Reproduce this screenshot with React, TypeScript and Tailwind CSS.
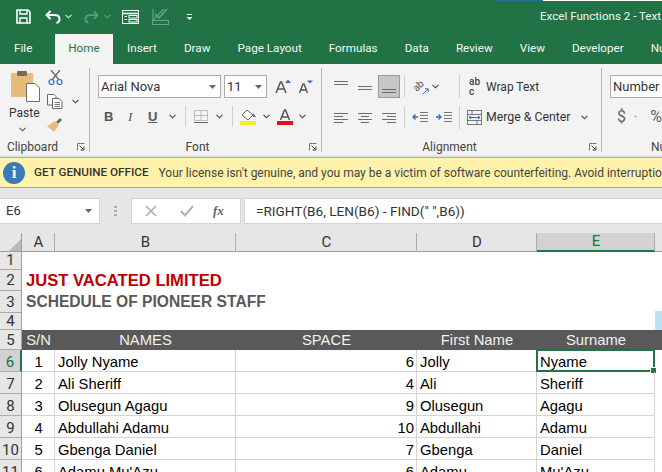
import React from "react";

const Chev = ({ c = "#444", className = "" }: { c?: string; className?: string }) => (
  <svg width="7" height="5" viewBox="0 0 7 5" className={className}>
    <path d="M0.5 0.8 L3.5 3.8 L6.5 0.8" fill="none" stroke={c} strokeWidth="1.1" />
  </svg>
);
const Tri = ({ className = "" }: { className?: string }) => (
  <svg width="7" height="4" viewBox="0 0 7 4" className={className}>
    <path d="M0 0 L7 0 L3.5 4 Z" fill="#666" />
  </svg>
);
const Launcher = ({ className = "" }: { className?: string }) => (
  <svg width="8" height="8" viewBox="0 0 8 8" className={className}>
    <path d="M0.5 7.5 V0.5 H7.5" fill="none" stroke="#777" />
    <path d="M2.5 2.5 L6.5 6.5 M7 3.5 V7 H3.5" fill="none" stroke="#444" />
  </svg>
);
const VSep = ({ className = "" }: { className?: string }) => <div className={`w-px bg-[#cfcfcf] ${className}`} />;
const GSep = () => <div className="w-px h-[84px] mt-[4px] bg-[#b9b9b9] shrink-0" />;

const Lines = ({ rows }: { rows: [number, number, number][] }) => (
  <svg width="16" height="14" viewBox="0 0 16 14">
    {rows.map(([x1, x2, y], i) => (
      <path key={i} d={`M${x1} ${y + 0.5} H${x2}`} stroke="#6d6d6d" />
    ))}
  </svg>
);

const tabs = ["Insert", "Draw", "Page Layout", "Formulas", "Data", "Review", "View", "Developer", "Nu"];

function TitleBar() {
  return (
    <div className="h-[34px] bg-[#217346] shrink-0 flex flex-col">
      <div className="h-px flex justify-end shrink-0">
        <div className="w-[47px] bg-[#1f6f9f]" />
        <div className="w-[119px] bg-white" />
      </div>
      <div className="flex-1 flex items-center pl-[16px] pb-[2px]">
        <svg width="15" height="15" viewBox="0 0 15 15">
          <path d="M1 1 H12 L14 3 V14 H1 Z" fill="none" stroke="#fff" strokeWidth="1.6" />
          <path d="M4 1 V5 H11 V1" fill="none" stroke="#fff" strokeWidth="1.4" />
          <path d="M4 14 V9 H11 V14" fill="none" stroke="#fff" strokeWidth="1.4" />
        </svg>
        <svg width="16" height="14" viewBox="0 0 16 14" className="ml-[14px]">
          <path d="M5.5 1 L1.5 5 L5.5 9" fill="none" stroke="#fff" strokeWidth="2" />
          <path d="M2 5 H9.5 C13 5 14.5 7 14.5 9 C14.5 11 13.5 12.5 11.5 13" fill="none" stroke="#fff" strokeWidth="2" />
        </svg>
        <Chev c="#dfeee6" className="ml-[4px]" />
        <svg width="15" height="14" viewBox="0 0 16 14" className="ml-[12px]">
          <path d="M10.5 1 L14.5 5 L10.5 9" fill="none" stroke="#5c9c7c" strokeWidth="2" />
          <path d="M14 5 H6.5 C3 5 1.5 7 1.5 9 C1.5 11 2.5 12.5 4.5 13" fill="none" stroke="#5c9c7c" strokeWidth="2" />
        </svg>
        <Chev c="#5c9c7c" className="ml-[5px]" />
        <svg width="17" height="14" viewBox="0 0 17 14" className="ml-[11px]">
          <rect x="0.5" y="0.5" width="16" height="13" fill="none" stroke="#fff" />
          <path d="M0.5 3.5 H16.5" stroke="#fff" strokeWidth="1.6" />
          <path d="M2.5 6.5 H5 M2.5 9.5 H5" stroke="#fff" />
          <rect x="7" y="5.5" width="8" height="2.5" fill="none" stroke="#fff" />
          <rect x="7" y="9.5" width="8" height="2.5" fill="none" stroke="#fff" />
        </svg>
        <svg width="17" height="17" viewBox="0 0 17 17" className="ml-[13px]">
          <path d="M1 1 V12 L12 1" fill="none" stroke="#6aa585" strokeWidth="1.1" />
          <path d="M3 6 L7 10 L15 1" fill="none" stroke="#6aa585" strokeWidth="1.5" />
          <rect x="0.5" y="12.5" width="16" height="4" fill="none" stroke="#6aa585" />
        </svg>
        <svg width="7" height="8" viewBox="0 0 7 8" className="ml-[17px]">
          <path d="M1 1.5 H6" stroke="#fff" />
          <path d="M0.5 4 H6.5 L3.5 7 Z" fill="#fff" />
        </svg>
        <div className="ml-auto text-[11.6px] text-[#f2f7f4] whitespace-nowrap w-[122px] overflow-hidden">
          Excel Functions 2 - Text
        </div>
      </div>
    </div>
  );
}

function Tabs() {
  return (
    <div className="h-[30px] bg-[#217346] shrink-0 flex items-stretch text-[11.7px] text-[#f4f8f6] whitespace-nowrap overflow-hidden">
      <div className="w-[55px] shrink-0 flex items-center pl-[14px] pb-[1px]">File</div>
      <div className="w-[58px] shrink-0 bg-[#f3f3f3] text-[#217346] flex items-center justify-center pb-[1px]">Home</div>
      <div className="flex items-center gap-[27px] pl-[14px] pb-[1px]">
        {tabs.map((t) => (
          <span key={t}>{t}</span>
        ))}
      </div>
    </div>
  );
}

function GroupLabel({ text, className = "" }: { text: string; className?: string }) {
  return (
    <div className="h-[17px] flex items-center text-[12px] text-[#444]">
      <span className={`flex-1 text-center whitespace-nowrap ${className}`}>{text}</span>
      <Launcher className="shrink-0 mr-[4px]" />
    </div>
  );
}

function Clipboard() {
  return (
    <div className="w-[89px] shrink-0 flex flex-col">
      <div className="h-[75px] flex mt-[6px]">
        <div className="w-[47px] pl-[11px] flex flex-col">
          <svg width="29" height="32" viewBox="0 0 29 32">
            <path d="M0 3 H22 V27 H0 Z" fill="#e5bd7b" />
            <rect x="6" y="1" width="10" height="5" rx="1" fill="#7b6a58" />
            <path d="M15.5 13.5 H24 L28.5 18 V31.5 H15.5 Z" fill="#fff" stroke="#6d6d6d" />
          </svg>
          <div className="text-[12px] text-[#333] -ml-[2px] mt-[3px] leading-[16px]">Paste</div>
          <Chev c="#555" className="ml-[8px] mt-[6px]" />
        </div>
        <div className="flex flex-col">
          <svg width="15" height="15" viewBox="0 0 15 15" className="ml-[1px]">
            <path d="M3 0 L11 10 M12 0 L4 10" stroke="#666" strokeWidth="1.3" />
            <circle cx="3.5" cy="12" r="2.5" fill="none" stroke="#2f6fb5" strokeWidth="1.2" />
            <circle cx="11.5" cy="12" r="2.5" fill="none" stroke="#2f6fb5" strokeWidth="1.2" />
          </svg>
          <div className="flex items-center mt-[9px]">
            <svg width="16" height="15" viewBox="0 0 16 15">
              <path d="M0.5 0.5 H7 L9 2.5 V11 H0.5 Z" fill="#fff" stroke="#666" />
              <path d="M5.5 4.5 H12 L15 7.5 V14.5 H5.5 Z" fill="#fff" stroke="#666" />
              <path d="M7.5 8.5 H13 M7.5 10.5 H13 M7.5 12.5 H13" stroke="#777" />
            </svg>
            <Chev c="#444" className="ml-[9px]" />
          </div>
          <svg width="16" height="15" viewBox="0 0 16 15" className="mt-[8px]">
            <path d="M9 5 L13 1 L15 3 L11 7 Z" fill="#666" />
            <path d="M0 9 L8 4 L12 8 L7 15 Z" fill="#e5bd7b" />
          </svg>
        </div>
      </div>
      <GroupLabel text="Clipboard" className="pr-[12px]" />
    </div>
  );
}

const BoxInput = ({ text, w }: { text: string; w: string }) => (
  <div className={`${w} h-[23px] bg-white border border-[#ababab] flex items-center justify-between pl-[2px] pr-[4px] text-[13px] text-[#333]`}>
    <span>{text}</span>
    <Tri />
  </div>
);

function FontGroup() {
  return (
    <div className="w-[231px] shrink-0 flex flex-col pl-[8px]">
      <div className="h-[75px] mt-[6px] flex flex-col">
        <div className="flex items-center mt-[5px]">
          <BoxInput text="Arial Nova" w="w-[123px]" />
          <div className="w-[3px]" />
          <BoxInput text="11" w="w-[43px]" />
          <svg width="17" height="15" viewBox="0 0 17 15" className="ml-[8px]">
            <path d="M1 14 L5.5 3 H6.5 L11 14 M3 10 H9" fill="none" stroke="#555" strokeWidth="1.5" />
            <path d="M10 4 L13 0.5 L16 4 Z" fill="#3f6fa8" />
          </svg>
          <svg width="14" height="14" viewBox="0 0 14 14" className="ml-[7px]">
            <path d="M0.5 13 L4 4 H5 L8.5 13 M2 10 H7" fill="none" stroke="#555" strokeWidth="1.4" />
            <path d="M8 0.5 H14 L11 3.5 Z" fill="#3f6fa8" />
          </svg>
        </div>
        <div className="flex items-center mt-[8px] h-[21px] text-[#555]">
          <span className="ml-[6px] w-[11px] font-bold text-[13px] leading-none font-['Liberation_Sans',sans-serif]">B</span>
          <span className="ml-[13px] w-[11px] italic text-[13px] leading-none font-['Liberation_Serif',serif]">I</span>
          <span className="ml-[9px] w-[12px] font-bold underline text-[13px] leading-none font-['Liberation_Sans',sans-serif]">U</span>
          <Chev className="ml-[9px]" />
          <VSep className="h-[21px] ml-[9px]" />
          <svg width="14" height="14" viewBox="0 0 14 14" className="ml-[8px]">
            <path d="M0.5 0.5 H13.5 V10.5 H0.5 Z M7 0.5 V10.5 M0.5 5.5 H13.5" fill="none" stroke="#8a8a8a" strokeDasharray="1 1" />
            <path d="M0 12.5 H14" stroke="#666" />
          </svg>
          <Chev className="ml-[8px]" />
          <VSep className="h-[21px] ml-[9px]" />
          <svg width="17" height="16" viewBox="0 0 17 16" className="ml-[7px]">
            <path d="M2 6 L7 1 L13 6 L8 11 Z" fill="#fff" stroke="#666" />
            <path d="M13 4 L16 8 L13 8 Z" fill="#3f6fa8" />
            <rect x="0" y="12" width="16" height="4" fill="#f4ef22" />
          </svg>
          <Chev className="ml-[6px]" />
          <svg width="16" height="16" viewBox="0 0 16 16" className="ml-[7px]">
            <path d="M3.5 11 L7.5 1 H8.5 L12.5 11 M5 8 H11" fill="none" stroke="#555" strokeWidth="1.5" />
            <rect x="0" y="12" width="16" height="4" fill="#e2111b" />
          </svg>
          <Chev className="ml-[6px]" />
        </div>
      </div>
      <GroupLabel text="Font" className="pr-[12px]" />
    </div>
  );
}

function Alignment() {
  return (
    <div className="w-[279px] shrink-0 flex flex-col">
      <div className="h-[75px] mt-[6px] flex flex-col pl-[12px]">
        <div className="flex items-center mt-[5px] h-[23px]">
          <Lines rows={[[0, 14, 1], [0, 14, 4]]} />
          <div className="ml-[8px]"><Lines rows={[[0, 14, 6], [0, 14, 9]]} /></div>
          <div className="ml-[4px] w-[22px] h-[23px] bg-[#c6c6c6] border border-[#9a9a9a] flex items-center justify-center">
            <Lines rows={[[1, 15, 9], [1, 15, 12]]} />
          </div>
          <VSep className="h-[21px] ml-[4px]" />
          <div className="ml-[8px] w-[16px] h-[16px] flex items-center justify-center relative">
            <span className="text-[10px] leading-none text-[#555] -rotate-45 -translate-x-[2px] -translate-y-[1px]">ab</span>
            <svg width="7" height="7" viewBox="0 0 7 7" className="absolute right-0 bottom-0">
              <path d="M0.5 6.5 L6 1 M3 0.8 H6.2 V4" fill="none" stroke="#3f6fa8" />
            </svg>
          </div>
          <Chev className="ml-[3px]" />
          <VSep className="h-[23px] ml-[20px]" />
          <div className="ml-[9px] w-[13px] shrink-0 flex flex-col text-[10px] leading-[10px] text-[#444] font-medium">
            <span>ab</span>
            <span>c</span>
          </div>
          <span className="ml-[4px] pt-[1px] text-[12px] text-[#333] whitespace-nowrap">Wrap Text</span>
        </div>
        <div className="flex items-center mt-[9px] h-[21px]">
          <Lines rows={[[0, 14, 2], [0, 9, 5], [0, 14, 8], [0, 9, 11]]} />
          <div className="ml-[8px]"><Lines rows={[[0, 14, 2], [3, 11, 5], [0, 14, 8], [3, 11, 11]]} /></div>
          <div className="ml-[8px]"><Lines rows={[[0, 14, 2], [5, 14, 5], [0, 14, 8], [5, 14, 11]]} /></div>
          <VSep className="h-[21px] ml-[6px]" />
          <svg width="16" height="13" viewBox="0 0 16 13" className="ml-[7px]">
            <path d="M8 1.5 H16 M8 4.5 H16 M8 7.5 H16 M8 10.5 H16" stroke="#777" />
            <path d="M6 6 H1 M3.5 3.5 L1 6 L3.5 8.5" fill="none" stroke="#2f6fb5" strokeWidth="1.4" />
          </svg>
          <svg width="16" height="13" viewBox="0 0 16 13" className="ml-[8px]">
            <path d="M8 1.5 H16 M8 4.5 H16 M8 7.5 H16 M8 10.5 H16" stroke="#777" />
            <path d="M0 6 H5 M2.5 3.5 L5 6 L2.5 8.5" fill="none" stroke="#2f6fb5" strokeWidth="1.4" />
          </svg>
          <VSep className="h-[23px] ml-[7px]" />
          <svg width="15" height="15" viewBox="0 0 15 15" className="ml-[7px]">
            <rect x="0.5" y="0.5" width="14" height="14" fill="none" stroke="#777" />
            <path d="M0.5 4.5 H14.5 M0.5 10.5 H14.5 M5 0.5 V4.5 M10 10.5 V14.5" stroke="#777" />
            <path d="M2 7.5 H13 M4 6 L2 7.5 L4 9 M11 6 L13 7.5 L11 9" fill="none" stroke="#2f6fb5" />
          </svg>
          <span className="ml-[4px] text-[12.3px] text-[#333] whitespace-nowrap">Merge &amp; Center</span>
          <Chev className="ml-[10px]" />
        </div>
      </div>
      <GroupLabel text="Alignment" className="pr-[12px]" />
    </div>
  );
}

function NumberGroup() {
  return (
    <div className="flex-1 min-w-0 flex flex-col overflow-hidden pl-[8px]">
      <div className="h-[75px] mt-[6px] flex flex-col">
        <div className="mt-[5px] w-[100px] shrink-0 h-[23px] bg-white border border-[#ababab] flex items-center pl-[2px] text-[13px] text-[#333]">Number</div>
        <div className="flex items-center mt-[8px] h-[21px] text-[16px] text-[#666] whitespace-nowrap">
          <span className="ml-[7px]">$</span>
          <Chev className="ml-[8px]" />
          <span className="ml-[13px]">%</span>
        </div>
      </div>
      <div className="h-[17px] flex items-center text-[12px] text-[#444] pl-[41px] whitespace-nowrap">Number</div>
    </div>
  );
}

function Ribbon() {
  return (
    <div className="h-[91px] bg-[#f3f3f3] shrink-0 flex overflow-hidden">
      <Clipboard />
      <GSep />
      <FontGroup />
      <GSep />
      <Alignment />
      <GSep />
      <NumberGroup />
    </div>
  );
}

function Banner() {
  return (
    <div className="mt-[2px] h-[31px] shrink-0 bg-[#fff2ab] border-y border-[#c7a65a] flex items-center whitespace-nowrap overflow-hidden text-[12px] text-[#444]">
      <div className="ml-[3px] w-[22px] h-[22px] rounded-full bg-[#3a7ab8] text-white flex items-center justify-center shrink-0 font-['Liberation_Serif',serif] font-bold text-[17px]">i</div>
      <span className="ml-[9px] font-medium text-[11.7px] text-[#333]">GET GENUINE OFFICE</span>
      <span className="ml-[10px]">Your license isn't genuine, and you may be a victim of software counterfeiting. Avoid interruption</span>
    </div>
  );
}

function FormulaBar() {
  return (
    <div className="h-[45px] shrink-0 bg-[#e6e6e6] flex items-start pt-[10px]">
      <div className="w-[100px] h-[26px] bg-white border-y border-r border-[#d4d4d4] flex items-center justify-between pl-[6px] pr-[7px] text-[13px] text-[#333]">
        <span>E6</span>
        <Tri />
      </div>
      <div className="w-[31px] h-[26px] flex items-center justify-center text-[#999]">
        <svg width="3" height="11" viewBox="0 0 3 11">
          <path d="M0 1 H3 M0 5 H3 M0 9 H3" stroke="#9a9a9a" strokeWidth="1.6" />
        </svg>
      </div>
      <div className="w-[110px] h-[26px] bg-white border border-[#d4d4d4] flex items-center">
        <svg width="12" height="12" viewBox="0 0 12 12" className="ml-[13px]">
          <path d="M1 1 L11 11 M11 1 L1 11" stroke="#b0b0b0" strokeWidth="1.6" />
        </svg>
        <svg width="14" height="12" viewBox="0 0 14 12" className="ml-[23px]">
          <path d="M1 6 L5 10.5 L13 1" fill="none" stroke="#b0b0b0" strokeWidth="2" />
        </svg>
        <span className="ml-[19px] italic font-bold text-[13px] text-[#666] font-['Liberation_Serif',serif]">fx</span>
      </div>
      <div className="w-[3px]" />
      <div className="flex-1 h-[26px] bg-white border-y border-l border-[#d4d4d4] flex items-center pl-[11px] text-[13.6px] text-[#333] whitespace-nowrap">
        =RIGHT(B6, LEN(B6) - FIND(" ",B6))
      </div>
    </div>
  );
}

const cols = "grid grid-cols-[22px_33px_181px_181px_120px_118px_7px]";

const ColHeader = ({ t, sel = false }: { t: string; sel?: boolean }) => (
  <div className={`flex items-center justify-center pl-[1px] text-[15px] leading-none font-['Roboto',sans-serif] border-r border-b ${sel ? "bg-[#d2d2d2] text-[#217346] border-r-[#ababab] border-b-2 border-b-[#217346]" : "bg-[#e6e6e6] text-[#333] border-r-[#ababab] border-b-[#9f9f9f]"}`}>
    {t}
  </div>
);

const RowHead = ({ n, sel = false, className = "" }: { n: number; sel?: boolean; className?: string }) => (
  <div className={`flex items-center justify-center text-[15px] leading-none font-['Roboto',sans-serif] border-b border-[#ababab] ${className} ${sel ? "bg-[#d2d2d2] text-[#217346] border-r-2 border-r-[#217346]" : "bg-[#e6e6e6] text-[#333] border-r border-r-[#9f9f9f]"}`}>
    {n}
  </div>
);

const C = ({ children, className = "" }: { children?: React.ReactNode; className?: string }) => (
  <div className={`flex items-center border-r border-b border-[#d4d4d4] text-[14.8px] leading-none text-black whitespace-nowrap overflow-hidden pl-[3px] pr-[2px] pt-[4px] ${className}`}>
    {children}
  </div>
);

const data: [number, string, number, string, string][] = [
  [1, "Jolly Nyame", 6, "Jolly", "Nyame"],
  [2, "Ali Sheriff", 4, "Ali", "Sheriff"],
  [3, "Olusegun Agagu", 9, "Olusegun", "Agagu"],
  [4, "Abdullahi Adamu", 10, "Abdullahi", "Adamu"],
  [5, "Gbenga Daniel", 7, "Gbenga", "Daniel"],
  [6, "Adamu Mu'Azu", 6, "Adamu", "Mu'Azu"],
];

function Blank({ h, n, pad = "", children }: { h: string; n: number; pad?: string; children?: React.ReactNode }) {
  return (
    <div className={`${cols} ${h}`}>
      <RowHead n={n} className={pad} />
      <div className="col-span-6 relative flex items-center pl-[4px] leading-none bg-white">{children}</div>
    </div>
  );
}

function Sheet() {
  return (
    <div className="flex-1 min-h-0 bg-white overflow-hidden font-['Liberation_Sans',sans-serif]">
      <div className={`${cols} h-[19px]`}>
        <div className="bg-[#e6e6e6] border-r border-b border-[#9f9f9f] flex items-end justify-end">
          <svg width="12" height="12" viewBox="0 0 12 12"><path d="M12 0 V12 H0 Z" fill="#b9b9b9" /></svg>
        </div>
        <ColHeader t="A" />
        <ColHeader t="B" />
        <ColHeader t="C" />
        <ColHeader t="D" />
        <ColHeader t="E" sel />
        <div className="bg-[#e6e6e6] border-b border-[#9f9f9f]" />
      </div>
      <Blank h="h-[18px]" n={1} />
      <Blank h="h-[21px]" n={2}>
        <span className="text-[16.6px] pt-[2px] font-bold text-[#c00000] whitespace-nowrap">JUST VACATED LIMITED</span>
      </Blank>
      <Blank h="h-[22px]" n={3} pad="pt-[2px]">
        <span className="text-[15.6px] font-bold text-[#595959] whitespace-nowrap">SCHEDULE OF PIONEER STAFF</span>
      </Blank>
      <Blank h="h-[17px]" n={4} pad="pt-[1px]">
        <div className="absolute right-0 top-[-2px] bottom-0 w-[7px] bg-[#bde0f3]" />
      </Blank>
      <div className={`${cols} h-[20px]`}>
        <RowHead n={5} className="pt-[2px]" />
        {["S/N", "NAMES", "SPACE", "First Name", "Surname"].map((t) => (
          <div key={t} className="bg-[#595959] text-[#f2f2f2] text-[14.8px] leading-none flex items-center justify-center">{t}</div>
        ))}
        <div className="bg-[#595959]" />
      </div>
      {data.map((r, i) => (
        <div key={r[0]} className={`${cols} h-[22px]`}>
          <RowHead n={i + 6} sel={i === 0} className="pt-[4px]" />
          <C className="justify-center">{r[0]}</C>
          <C>{r[1]}</C>
          <C className="justify-end">{r[2]}</C>
          <C>{r[3]}</C>
          <C className="relative overflow-visible">
            {r[4]}
            {i === 0 && (
              <div className="absolute -left-px -top-px -right-px -bottom-px border-2 border-[#217346] pointer-events-none">
                <div className="absolute -right-[3px] -bottom-[3px] w-[5px] h-[5px] bg-[#217346] outline outline-white" />
              </div>
            )}
          </C>
          <div className="bg-white" />
        </div>
      ))}
    </div>
  );
}

export default function App() {
  return (
    <div className="w-[662px] h-[472px] overflow-hidden flex flex-col bg-[#e6e6e6] font-['Roboto',sans-serif]">
      <TitleBar />
      <Tabs />
      <Ribbon />
      <Banner />
      <FormulaBar />
      <Sheet />
    </div>
  );
}
